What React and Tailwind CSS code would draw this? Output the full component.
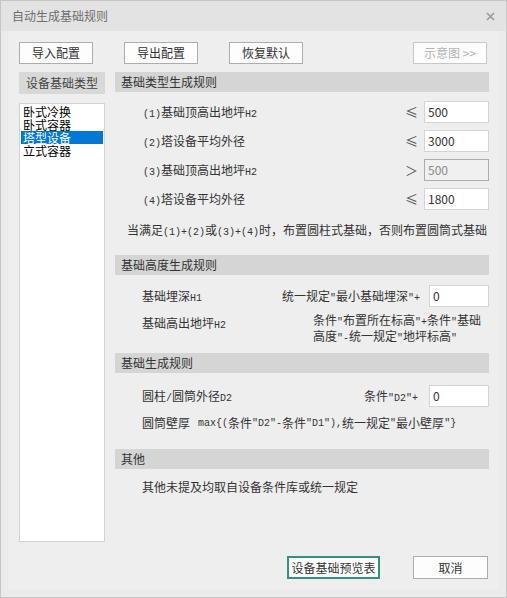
const cjk = "font-['Microsoft_YaHei','Noto_Sans_CJK_SC',sans-serif]";

// ascii runs drawn narrow like the SimSun half-width glyphs
function T({ text }) {
  const parts = text.split(/([\x20-\x7e]+)/).filter(Boolean);
  return (
    <>
      {parts.map((p, i) =>
        /^[\x20-\x7e]+$/.test(p) ? (
          <span key={i} className="font-['Liberation_Mono',monospace] text-[10px] whitespace-pre">
            {p}
          </span>
        ) : (
          <span key={i}>{p}</span>
        )
      )}
    </>
  );
}

function Button({ children, className = "", disabled }) {
  return (
    <div
      className={`flex h-[22px] w-[74px] items-center justify-center border bg-[#fdfdfd] text-[12px] ${
        disabled ? "border-[#c8c8c8] text-[#b4b4b4]" : "border-[#adadad] text-[#333]"
      } ${className}`}
    >
      {children}
    </div>
  );
}

function SectionHeader({ title, className = "" }) {
  return (
    <div className={`flex h-[20px] items-center bg-[#d5d5d5] pl-[6px] text-[12px] text-[#333] ${className}`}>
      {title}
    </div>
  );
}

function Field({ value, disabled, className = "w-[65px]" }) {
  return (
    <div
      className={`flex h-[22px] shrink-0 items-center border pl-[3px] text-[12px] ${
        disabled ? "border-[#acacac] bg-[#f0f0f0] text-[#8a8a8a]" : "border-[#d4d4d4] bg-white text-[#333]"
      } ${className}`}
    >
      {value}
    </div>
  );
}

const typeRules = [
  { label: "(1)基础顶高出地坪H2", op: "≤", value: "500" },
  { label: "(2)塔设备平均外径", op: "≤", value: "3000" },
  { label: "(3)基础顶高出地坪H2", op: "＞", value: "500", disabled: true },
  { label: "(4)塔设备平均外径", op: "≤", value: "1800" },
];

const equipment = ["卧式冷换", "卧式容器", "塔型设备", "立式容器"];

export default function App() {
  return (
    <div className={`flex h-[598px] w-[507px] flex-col border border-[#c6c6c6] bg-[#ebebeb] ${cjk}`}>
      <div className="flex h-[30px] shrink-0 items-center justify-between bg-[#e3e3e3] pl-[11px] pr-[11px]">
        <span className="text-[12px] text-[#6e6e6e]">自动生成基础规则</span>
        <svg width="9" height="9" viewBox="0 0 9 9" className="mt-[1px]">
          <path d="M1 1L8 8M8 1L1 8" stroke="#9a9a9a" strokeWidth="1.6" />
        </svg>
      </div>

      <div className="flex flex-1 px-[7px] pb-[8px]">
        <div className="flex flex-1 flex-col bg-[#eeeeee] pl-[11px] pr-[10px] pt-[11px] pb-[10px]">
          <div className="flex h-[22px] items-center">
            <Button>导入配置</Button>
            <Button className="ml-[31px]">导出配置</Button>
            <Button className="ml-[31px]">恢复默认</Button>
            <Button disabled className="ml-auto mr-[2px]">
              示意图&nbsp;&gt;&gt;
            </Button>
          </div>

          <div className="mt-[8px] flex h-[470px] gap-[10px]">
            <div className="flex w-[86px] shrink-0 flex-col">
              <div className="flex h-[22px] items-center justify-center bg-[#d8d8d8] text-[12px] text-[#444]">
                设备基础类型
              </div>
              <div className="mt-[9px] flex-1 border border-[#d2d2d2] bg-white px-[1px] pt-[1px]">
                {equipment.map((name) => (
                  <div
                    key={name}
                    className={`h-[13px] pl-[2px] text-[12px] leading-[13px] ${
                      name === "塔型设备" ? "bg-[#0078d7] text-white" : "text-black"
                    }`}
                  >
                    {name}
                  </div>
                ))}
              </div>
            </div>

            <div className="flex flex-1 flex-col text-[12px] text-[#333]">
              <SectionHeader title="基础类型生成规则" />
              <div className="mt-[9px] flex flex-col gap-[7px]">
                {typeRules.map((r) => (
                  <div key={r.label} className="flex h-[22px] items-center">
                    <div className="flex-1 pl-[28px]">
                      <T text={r.label} />
                    </div>
                    <div className="w-[19px] text-[13px] text-[#555]">{r.op}</div>
                    <Field value={r.value} disabled={r.disabled} />
                  </div>
                ))}
              </div>
              <div className="mt-[12px] h-[16px] whitespace-nowrap pl-[12px] leading-[16px]">
                <T text="当满足(1)+(2)或(3)+(4)时，布置圆柱式基础，否则布置圆筒式基础" />
              </div>

              <SectionHeader title="基础高度生成规则" className="mt-[17px]" />
              <div className="mt-[10px] flex h-[22px] items-center">
                <div className="flex-1 pl-[27px]">
                  <T text="基础埋深H1" />
                </div>
                <div className="mr-[9px]">
                  <T text={'统一规定"最小基础埋深"+'} />
                </div>
                <Field value="0" className="w-[60px]" />
              </div>
              <div className="mt-[6px] flex h-[26px]">
                <div className="w-[198px] shrink-0 pl-[27px] pt-[2px] leading-[16px]">
                  <T text="基础高出地坪H2" />
                </div>
                <div className="leading-[13px]">
                  <T text={'条件"布置所在标高"+条件"基础'} />
                  <br />
                  <T text={'高度"-统一规定"地坪标高"'} />
                </div>
              </div>

              <SectionHeader title="基础生成规则" className="mt-[14px]" />
              <div className="mt-[12px] flex h-[22px] items-center">
                <div className="flex-1 pl-[27px]">
                  <T text="圆柱/圆筒外径D2" />
                </div>
                <div className="mr-[11px]">
                  <T text={'条件"D2"+'} />
                </div>
                <Field value="0" className="w-[60px]" />
              </div>
              <div className="mt-[8px] flex h-[16px] items-center whitespace-nowrap pl-[27px]">
                <span className="w-[56px] shrink-0">圆筒壁厚</span>
                <T text={'max{(条件"D2"-条件"D1"),统一规定"最小壁厚"}'} />
              </div>

              <SectionHeader title="其他" className="mt-[18px]" />
              <div className="mt-[10px] h-[16px] pl-[27px] leading-[16px]">其他未提及均取自设备条件库或统一规定</div>
            </div>
          </div>

          <div className="mt-[14px] flex h-[23px] justify-end pr-[1px]">
            <div className="flex w-[93px] items-center justify-center border-2 border-[#33917f] bg-white text-[12px] text-[#333]">
              设备基础预览表
            </div>
            <div className="ml-[33px] flex w-[75px] items-center justify-center border border-[#adadad] bg-[#fdfdfd] text-[12px] text-[#333]">
              取消
            </div>
          </div>
        </div>
      </div>
    </div>
  );
}
